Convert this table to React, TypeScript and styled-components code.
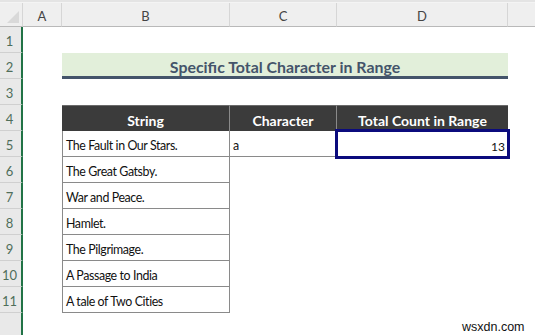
import React from "react";
import styled, { createGlobalStyle } from "styled-components";

const Global = createGlobalStyle`
  html, body { margin: 0; padding: 0; background: #fff; }
  body { width: 535px; height: 335px; overflow: hidden; font-family: Lato, "Open Sans", sans-serif; }
`;

const Page = styled.div`
  position: relative;
  width: 535px;
  height: 335px;
  overflow: hidden;
  background: #fff;
`;

const TopStrip = styled.div`
  height: 3px;
  background: #e4e4e4;
  border-bottom: 1px solid #f4f4f4;
  box-sizing: border-box;
`;

const Sheet = styled.div`
  display: grid;
  grid-template-columns: 23px 39px 168px 107px 171px 1fr;
  grid-template-rows: 24px repeat(12, 26px);
`;

const ColHead = styled.div<{ $last?: boolean }>`
  background: #efefef;
  border-bottom: 1px solid #b9b9b9;
  border-right: ${(p) => (p.$last ? "none" : "1px solid #d6d6d6")};
  box-sizing: border-box;
  display: flex;
  align-items: center;
  justify-content: center;
  font-family: Lato, sans-serif;
  font-size: 13px;
  color: #444;
  padding-top: 2px;
`;

const Corner = styled.div`
  position: relative;
  background: #efefef;
  border-bottom: 1px solid #b9b9b9;
  border-right: 1px solid #d6d6d6;
  box-sizing: border-box;
  &::after {
    content: "";
    position: absolute;
    right: 3px;
    bottom: 3px;
    width: 0;
    height: 0;
    border-left: 12px solid transparent;
    border-bottom: 12px solid #d9d9d9;
  }
`;

const RowHead = styled.div`
  background: #e9e9e9;
  border-bottom: 1px solid #d0d0d0;
  border-right: 2px solid #217346;
  box-sizing: border-box;
  display: flex;
  align-items: center;
  justify-content: center;
  padding-right: 2px;
  padding-top: 2px;
  font-family: Lato, sans-serif;
  font-size: 13px;
  color: #4f6e5a;
`;

const Cell = styled.div<{ $left?: boolean; $right?: boolean; $bottom?: boolean; $align?: string }>`
  box-sizing: border-box;
  background: #fff;
  border-left: ${(p) => (p.$left ? "1px solid #8a8a8a" : "none")};
  border-right: ${(p) => (p.$right ? "1px solid #8a8a8a" : "none")};
  border-bottom: ${(p) => (p.$bottom ? "1px solid #8a8a8a" : "none")};
  display: flex;
  align-items: center;
  justify-content: ${(p) => p.$align || "flex-start"};
  padding: 4px 3px 0 3px;
  font-family: Lato, sans-serif;
  font-size: 12.4px;
  letter-spacing: -0.4px;
  color: #111;
  white-space: nowrap;
`;

const Title = styled.div`
  grid-column: span 3;
  background: #e2efda;
  border-bottom: 3px solid #44546a;
  box-sizing: border-box;
  display: flex;
  align-items: center;
  justify-content: center;
  padding-top: 3px;
  font-family: Lato, sans-serif;
  font-weight: 700;
  font-size: 15.9px;
  color: #44546a;
`;

const HeadCell = styled.div<{ $sep?: boolean }>`
  background: #3b3b3b;
  border-top: 1px solid #6a6a6a;
  border-right: ${(p) => (p.$sep ? "1px solid #8a8a8a" : "none")};
  box-sizing: border-box;
  display: flex;
  align-items: center;
  justify-content: center;
  padding-top: 3px;
  font-family: Lato, sans-serif;
  font-weight: 700;
  font-size: 14px;
  color: #fff;
`;

const Selected = styled(Cell)`
  outline: 3px solid #0b0b7d;
  outline-offset: -1px;
  position: relative;
  z-index: 1;
  align-items: flex-end;
  padding: 0 3px 3px 0;
  font-size: 12px;
  letter-spacing: 0;
`;

const Watermark = styled.div`
  position: absolute;
  left: 462px;
  bottom: 1px;
  font-family: "Liberation Sans", Arial, sans-serif;
  font-size: 12.5px;
  color: #111;
  text-shadow: 0 0 2px #fff;
`;

const Empty = () => <Cell />;

const books = [
  "The Great Gatsby.",
  "War and Peace.",
  "Hamlet.",
  "The Pilgrimage.",
  "A Passage to India",
  "A tale of Two Cities",
];

export default function App() {
  return (
    <Page>
      <Global />
      <TopStrip />
      <Sheet>
        <Corner />
        <ColHead>A</ColHead>
        <ColHead>B</ColHead>
        <ColHead>C</ColHead>
        <ColHead>D</ColHead>
        <ColHead $last />

        <RowHead>1</RowHead>
        <Empty /><Empty /><Empty /><Empty /><Empty />

        <RowHead>2</RowHead>
        <Empty />
        <Title>Specific Total Character in Range</Title>
        <Empty />

        <RowHead>3</RowHead>
        <Empty /><Empty /><Empty /><Empty /><Empty />

        <RowHead>4</RowHead>
        <Empty />
        <HeadCell $sep>String</HeadCell>
        <HeadCell $sep>Character</HeadCell>
        <HeadCell>Total Count in Range</HeadCell>
        <Empty />

        <RowHead>5</RowHead>
        <Empty />
        <Cell $left $right $bottom>The Fault in Our Stars.</Cell>
        <Cell $right $bottom>a</Cell>
        <Selected $align="flex-end">13</Selected>
        <Empty />

        {books.map((b, i) => (
          <React.Fragment key={b}>
            <RowHead>{i + 6}</RowHead>
            <Empty />
            <Cell $left $right $bottom>{b}</Cell>
            <Empty />
            <Empty />
            <Empty />
          </React.Fragment>
        ))}

        <RowHead />
        <Empty /><Empty /><Empty /><Empty /><Empty />
      </Sheet>
      <Watermark>wsxdn.com</Watermark>
    </Page>
  );
}
